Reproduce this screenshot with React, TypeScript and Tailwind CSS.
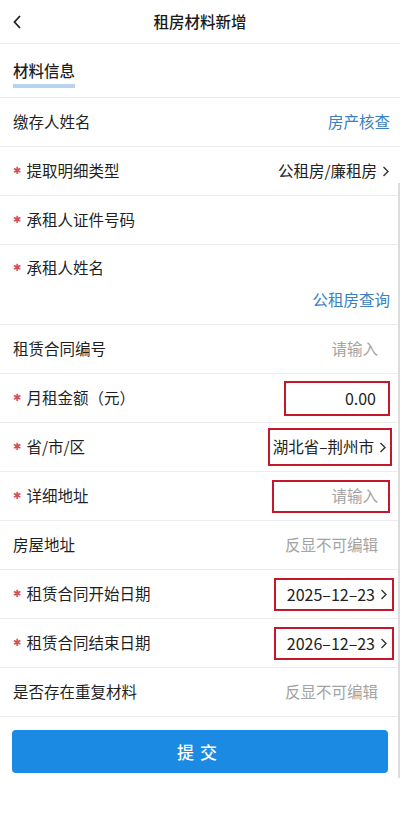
import type { ReactNode } from "react";

const font = { fontFamily: '"Noto Sans CJK SC", "Noto Sans", sans-serif' };

const Chevron = () => (
  <svg width="8" height="13" viewBox="0 0 8 13" className="ml-[5px] shrink-0">
    <path d="M1.5 2 L6 6.5 L1.5 11" fill="none" stroke="#333" strokeWidth="1.4" />
  </svg>
);

const Star = () => (
  <span
    className="mr-[5px] text-[10px] leading-none text-[#d0505c]"
    style={{ fontFamily: '"DejaVu Sans", sans-serif' }}
  >
    ✱
  </span>
);

const Row = ({
  label,
  required,
  children,
}: {
  label: string;
  required?: boolean;
  children?: ReactNode;
}) => (
  <div className="flex h-[49px] items-center justify-between border-b border-[#ececec] pl-[13px] pr-[10px]">
    <div className="flex items-center text-[15.5px] text-[#1f1f1f]">
      {required && <Star />}
      {label}
    </div>
    {children}
  </div>
);

export default function App() {
  return (
    <div className="relative min-h-[817px] w-[400px] bg-white" style={font}>
      {/* header */}
      <div className="flex h-[44px] items-center border-b border-[#ececec] px-[12px]">
        <svg width="10" height="16" viewBox="0 0 10 16">
          <path d="M8 2 L2.5 8 L8 14" fill="none" stroke="#222" strokeWidth="1.8" />
        </svg>
        <div className="flex-1 pr-[10px] text-center text-[15.5px] font-medium text-[#1a1a1a]">租房材料新增</div>
      </div>

      {/* section title */}
      <div className="flex h-[54px] items-end border-b border-[#ececec] px-[13px] pb-[9px]">
        <div>
          <div className="text-[15.5px] font-medium leading-[22px] text-[#1f1f1f]">材料信息</div>
          <div className="mt-[3px] h-[4px] w-full bg-[#b7d3ee]" />
        </div>
      </div>

      <Row label="缴存人姓名">
        <span className="text-[15.5px] text-[#3a80c2]">房产核查</span>
      </Row>
      <Row label="提取明细类型" required>
        <span className="flex items-center text-[15.5px] text-[#222]">
          公租房/廉租房
          <Chevron />
        </span>
      </Row>
      <Row label="承租人证件号码" required />
      <div className="flex h-[80px] flex-col border-b border-[#ececec] pl-[13px] pr-[10px] pt-[11px]">
        <div className="flex items-center text-[15.5px] text-[#1f1f1f]">
          <Star />
          承租人姓名
        </div>
        <div className="mt-[9px] text-right text-[15.5px] text-[#3a80c2]">公租房查询</div>
      </div>
      <Row label="租赁合同编号">
        <span className="pr-[12px] text-[15.5px] text-[#a3a3a3]">请输入</span>
      </Row>
      <Row label="月租金额（元）" required>
        <span className="flex h-[35px] w-[106px] items-center justify-end border-2 border-[#c2182a] pr-[12px] text-[16px] text-[#222]">
          0.00
        </span>
      </Row>
      <Row label="省/市/区" required>
        <span className="mr-[-2px] flex h-[38px] items-center border-2 border-[#c2182a] pl-[3px] pr-[3px] text-[15.5px] text-[#222]">
          湖北省–荆州市
          <Chevron />
        </span>
      </Row>
      <Row label="详细地址" required>
        <span className="flex h-[33px] w-[118px] items-center justify-end border-2 border-[#c2182a] pr-[10px] text-[15.5px] text-[#a3a3a3]">
          请输入
        </span>
      </Row>
      <Row label="房屋地址">
        <span className="pr-[12px] text-[15.5px] text-[#a3a3a3]">反显不可编辑</span>
      </Row>
      <Row label="租赁合同开始日期" required>
        <span className="mr-[-4px] flex h-[33px] w-[120px] items-center justify-end border-2 border-[#c2182a] pr-[4px] text-[16px] text-[#222]">
          2025–12–23
          <Chevron />
        </span>
      </Row>
      <Row label="租赁合同结束日期" required>
        <span className="mr-[-4px] flex h-[33px] w-[120px] items-center justify-end border-2 border-[#c2182a] pr-[4px] text-[16px] text-[#222]">
          2026–12–23
          <Chevron />
        </span>
      </Row>
      <Row label="是否存在重复材料">
        <span className="pr-[12px] text-[15.5px] text-[#a3a3a3]">反显不可编辑</span>
      </Row>

      <div className="px-[12px] pt-[13px]">
        <button className="flex h-[43px] w-full items-center justify-center rounded-[4px] bg-[#1a8ae2] text-[17px] font-medium tracking-[6px] text-white">
          提交
        </button>
      </div>

      {/* scrollbar indicator */}
      <div className="absolute right-0 top-[183px] h-[595px] w-[2px] bg-[#dcdcdc]" />
    </div>
  );
}
